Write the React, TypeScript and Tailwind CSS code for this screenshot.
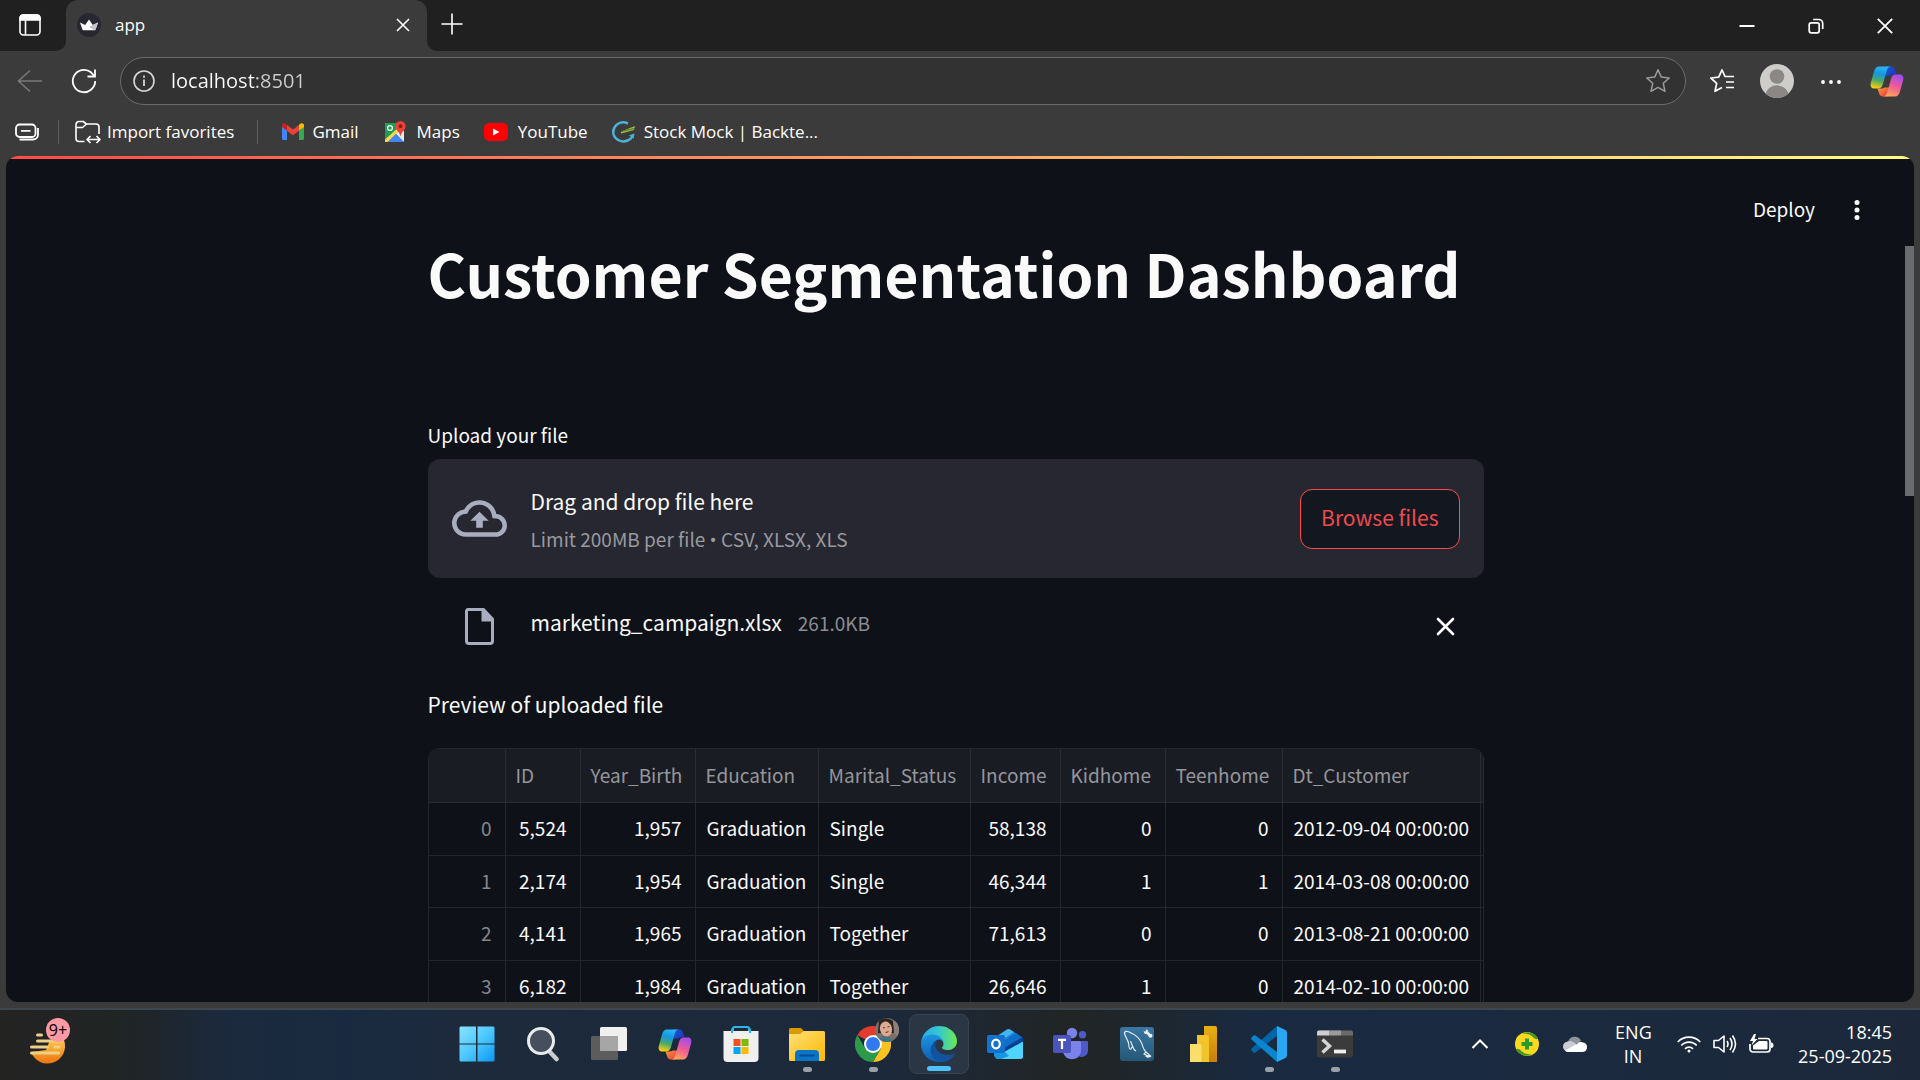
import React, { useId } from "react";

const uiFont = "font-['Segoe_UI','Open_Sans','Noto_Sans',sans-serif]";
const appFont = "font-['Source_Sans_Pro','Noto_Sans_CJK_SC',sans-serif]";

const columns = [
  { name: "", width: "w-[77px]", numeric: true },
  { name: "ID", width: "w-[75px]", numeric: true },
  { name: "Year_Birth", width: "w-[115px]", numeric: true },
  { name: "Education", width: "w-[123px]", numeric: false },
  { name: "Marital_Status", width: "w-[152px]", numeric: false },
  { name: "Income", width: "w-[90px]", numeric: true },
  { name: "Kidhome", width: "w-[105px]", numeric: true },
  { name: "Teenhome", width: "w-[117px]", numeric: true },
  { name: "Dt_Customer", width: "w-[198px]", numeric: false },
];

const rows = [
  ["0", "5,524", "1,957", "Graduation", "Single", "58,138", "0", "0", "2012-09-04 00:00:00"],
  ["1", "2,174", "1,954", "Graduation", "Single", "46,344", "1", "1", "2014-03-08 00:00:00"],
  ["2", "4,141", "1,965", "Graduation", "Together", "71,613", "0", "0", "2013-08-21 00:00:00"],
  ["3", "6,182", "1,984", "Graduation", "Together", "26,646", "1", "0", "2014-02-10 00:00:00"],
];

function CopilotIcon({ className }: { className: string }) {
  const id = useId();
  return (
    <svg viewBox="0 0 34 31" className={className} aria-hidden="true">
      <defs>
        <linearGradient id={id + "a"} x1="0.6" y1="0" x2="0.35" y2="1">
          <stop offset="0" stopColor="#2fb5f4" />
          <stop offset="0.35" stopColor="#1597e0" />
          <stop offset="0.65" stopColor="#4aa86a" />
          <stop offset="1" stopColor="#f5cf10" />
        </linearGradient>
        <linearGradient id={id + "b"} x1="0.7" y1="0" x2="0.3" y2="1">
          <stop offset="0" stopColor="#a14df0" />
          <stop offset="0.5" stopColor="#ee5a96" />
          <stop offset="1" stopColor="#ffa75a" />
        </linearGradient>
        <linearGradient id={id + "c"} x1="0" y1="0" x2="1" y2="0.6">
          <stop offset="0" stopColor="#0c5fd0" />
          <stop offset="1" stopColor="#2536c4" />
        </linearGradient>
        <linearGradient id={id + "d"} x1="0" y1="0" x2="1" y2="1">
          <stop offset="0" stopColor="#ff9a3c" />
          <stop offset="1" stopColor="#e0393e" />
        </linearGradient>
      </defs>
      <path d="M15 .5h6c2.500 0 3.500 1.500 4 3.500l1.500 4.500h-4q-2 0-3 1h-4.500z" fill={`url(#${id}c)`} />
      <path d="M19 30.500h-6c-2.500 0-3.500-1.500-4-3.500l-1.500-4.500h4q2 0 3-1H19z" fill={`url(#${id}d)`} />
      <path d="M9 0.500h12c-2 0-3.500 1.500-4.200 4l-4 14c-.8 2.500-2 4-4.800 4H4.500C1.500 22.500 0 20.500 .8 17L4 5.500C5 2 6.500.5 9 .5z" fill={`url(#${id}a)`} />
      <path d="M25 30.500H13c2 0 3.500-1.500 4.200-4l4-14c.8-2.500 2-4 4.800-4h3.500c3 0 4.500 2 3.700 5.500L30 25.500c-1 3.500-2.500 5-5 5z" fill={`url(#${id}b)`} />
    </svg>
  );
}

function TabStrip() {
  return (
    <header className="flex h-[51px] shrink-0 bg-[#202020]">
      <div className="flex w-[66px] items-center pb-0.5 pl-[18px]">
        <button aria-label="Tab actions" className="text-white">
          <svg viewBox="0 0 24 24" className="size-6" fill="none" stroke="currentColor" strokeWidth="1.6">
            <rect x="2" y="2" width="20" height="20" rx="3.500" />
            <path d="M2 7V5a3 3 0 0 1 3-3h14a3 3 0 0 1 3 3v2z" fill="currentColor" />
            <path d="M7.500 7v15" />
          </svg>
        </button>
      </div>
      <div className="flex items-end">
        <svg viewBox="0 0 10 10" className="-ml-2.5 size-2.5" aria-hidden="true"><path d="M10 0v10H0A10 10 0 0 0 10 0z" fill="#3b3b3b" /></svg>
        <div className="flex h-full w-[361px] items-center rounded-t-xl bg-[#3b3b3b] pr-[17px] pb-0.5 pl-[11px]">
          <svg viewBox="0 0 24 24" className="size-6" aria-hidden="true">
            <circle cx="12" cy="12" r="12" fill="#262730" />
            <path d="M3 9.500l5.200 2.600L12 6.500l3.800 5.600L21 9.500 18.600 16.500q-.3.700-1 .7H6.400q-.7 0-1-.7z" fill="#fff" />
            <path d="M15.800 12.100L21 9.500l-2.400 7q-.3.700-1 .7L12 14z" fill="#c4c4c8" />
          </svg>
          <span className="ml-3.5 flex-1 text-[17px] leading-6 text-white">app</span>
          <button aria-label="Close tab" className="text-white">
            <svg viewBox="0 0 14 14" className="size-3.5" fill="none" stroke="currentColor" strokeWidth="1.6"><path d="M1 1l12 12M13 1L1 13" /></svg>
          </button>
        </div>
        <svg viewBox="0 0 10 10" className="size-2.5" aria-hidden="true"><path d="M0 0v10h10A10 10 0 0 1 0 0z" fill="#3b3b3b" /></svg>
      </div>
      <button aria-label="New tab" className="ml-1 flex items-center pb-1 text-white">
        <svg viewBox="0 0 22 22" className="size-[22px]" fill="none" stroke="currentColor" strokeWidth="1.600"><path d="M11 .5v21M.5 11h21" /></svg>
      </button>
      <div className="ml-auto flex items-center gap-[53px] pr-[27px] text-white">
        <button aria-label="Minimize"><svg viewBox="0 0 16 16" className="size-4" stroke="currentColor" strokeWidth="2"><path d="M.5 8h15" /></svg></button>
        <button aria-label="Restore">
          <svg viewBox="0 0 16 16" className="size-4" fill="none" stroke="currentColor" strokeWidth="1.700"><rect x="1.200" y="4.800" width="10" height="10" rx="2" /><path d="M5.200 1.500h5.500a4 4 0 0 1 4 4V11" /></svg>
        </button>
        <button aria-label="Close"><svg viewBox="0 0 16 16" className="size-4" fill="none" stroke="currentColor" strokeWidth="1.800"><path d="M.8.8l14.400 14.400M15.200.8L.8 15.200" /></svg></button>
      </div>
    </header>
  );
}

function Toolbar() {
  return (
    <div className="flex h-[60px] shrink-0 items-center pr-4 pl-[17px]">
      <button aria-label="Back" className="text-[#7a7a7a]">
        <svg viewBox="0 0 26 24" className="h-6 w-[26px]" fill="none" stroke="currentColor" strokeWidth="1.500"><path d="M25 12H1.500M13 1.500L1.500 12 13 22.500" /></svg>
      </button>
      <button aria-label="Refresh" className="ml-7 text-white">
        <svg viewBox="0 0 26 26" className="size-[26px]" fill="none" stroke="currentColor" strokeWidth="1.800"><path d="M24.200 13A11.200 11.200 0 1 1 20 4.300L23.500 8M24 1.500V8.500h-7.500" /></svg>
      </button>
      <div className="ml-[23px] flex h-12 flex-1 items-center rounded-full border border-[#6b6b6b] bg-[#323232] pr-3.5 pl-3">
        <button aria-label="Site information" className="text-[#d6d6d6]">
          <svg viewBox="0 0 22 22" className="size-[22px]" fill="none" stroke="currentColor" strokeWidth="1.600"><circle cx="11" cy="11" r="10" /><path d="M11 9.500V16M11 5.500v2.200" strokeWidth="1.800" /></svg>
        </button>
        <input
          aria-label="Address"
          defaultValue="localhost:8501"
          className="ml-4 min-w-0 flex-1 bg-[linear-gradient(90deg,#ffffff_84px,#cfcfcf_84px)] bg-clip-text text-[20px] leading-7 text-transparent outline-none"
        />
        <button aria-label="Add to favorites" className="text-[#9b9b9b]">
          <svg viewBox="0 0 26 26" className="size-[26px]" fill="none" stroke="currentColor" strokeWidth="1.500" strokeLinejoin="round"><path d="M13 1.800l3.300 7.300 7.900.9-5.900 5.300 1.700 8L13 19.400l-7 3.900 1.700-8L1.800 10l7.900-.9z" /></svg>
        </button>
      </div>
      <div className="ml-[23px] flex items-center gap-[25px] text-white">
        <button aria-label="Favorites">
          <svg viewBox="0 0 26 26" className="size-[26px]" fill="none" stroke="currentColor" strokeWidth="1.700" strokeLinejoin="round"><path d="M16 8.500L13 1.800 9.700 9.100l-7.900.9 5.900 5.300-1.700 8 7-3.900M17 8.500h8M17 14h8M17 19.500h8M15.500 8.500h2" /></svg>
        </button>
        <button aria-label="Profile">
          <svg viewBox="0 0 34 34" className="size-[34px]">
            <circle cx="17" cy="17" r="17" fill="#cfcdca" />
            <circle cx="17" cy="12.500" r="7.300" fill="#8b8784" />
            <path d="M5.500 29.500a12.200 12.200 0 0 1 23 0A17 17 0 0 1 5.500 29.500z" fill="#8b8784" />
          </svg>
        </button>
        <button aria-label="Settings and more" className="ml-0.5">
          <svg viewBox="0 0 20 20" className="size-5" fill="currentColor"><circle cx="2" cy="11" r="1.900" /><circle cx="10" cy="11" r="1.900" /><circle cx="18" cy="11" r="1.900" /></svg>
        </button>
        <button aria-label="Copilot" className="ml-1"><CopilotIcon className="h-[31px] w-[34px]" /></button>
      </div>
    </div>
  );
}

function Bookmarks() {
  return (
    <nav aria-label="Favorites bar" className="flex h-[45px] shrink-0 items-center pb-1 pl-[15px] text-[17px] leading-6 text-white">
      <button aria-label="Workspaces">
        <svg viewBox="0 0 24 18" className="h-[18px] w-6" fill="none" stroke="currentColor" strokeWidth="1.800"><rect x="1" y="1.500" width="19.500" height="12.500" rx="3.500" /><path d="M6 7.800h9.500M4.500 16.500H18a5 5 0 0 0 5-5V5" /></svg>
      </button>
      <span className="ml-[19px] h-6 w-px bg-[#606060]" />
      <button className="ml-4 flex items-center gap-1.5">
        <svg viewBox="0 0 26 24" className="h-6 w-[26px]" fill="none" stroke="currentColor" strokeWidth="1.600" strokeLinejoin="round">
          <path d="M9.500 21.500H4a3 3 0 0 1-3-3v-14a3 3 0 0 1 3-3h4.200L11.500 4H21a3 3 0 0 1 3 3v7M1 7.500h6.500L11.500 4" />
          <path d="M12.500 19.500h12M15.500 16l-3.500 3.500 3.500 3.500M21.500 16l3.500 3.500-3.500 3.500" />
        </svg>
        Import favorites
      </button>
      <span className="ml-[23px] h-6 w-px bg-[#606060]" />
      <a href="#gmail" className="ml-6 flex items-center gap-2">
        <svg viewBox="0 0 22 17" className="h-[17px] w-[22px]" aria-hidden="true">
          <path d="M0 3v12.500A1.500 1.500 0 0 0 1.500 17H5V7.500z" fill="#4285f4" />
          <path d="M22 3v12.500a1.500 1.500 0 0 1-1.500 1.500H17V7.500z" fill="#34a853" />
          <path d="M17 2v5.500L22 4V2.500C22 .3 19.800-.5 18.200.8z" fill="#fbbc04" />
          <path d="M0 2.500V4l5 3.700V2L3.800.8C2.200-.5 0 .3 0 2.500z" fill="#c5221f" />
          <path d="M5 2v5.700l6 4.500 6-4.500V2l-6 4.500z" fill="#ea4335" />
        </svg>
        Gmail
      </a>
      <a href="#maps" className="ml-6 flex items-center gap-2.5">
        <svg viewBox="0 0 24 24" className="size-6" aria-hidden="true">
          <rect x="2" y="3" width="19" height="19" rx="1.500" fill="#e8eaed" />
          <path d="M2 4.500A1.500 1.500 0 0 1 3.500 3H15l1 6L2 22z" fill="#1e9e54" />
          <path d="M3 22L12 12.500 21 22z" fill="#4285f4" />
          <path d="M2 19.500L16 7l2 2L4.500 22H2z" fill="#fbd64b" />
          <circle cx="7" cy="8" r="2.400" fill="none" stroke="#fff" strokeWidth="1.200" />
          <path d="M17.500 1a5.200 5.200 0 0 1 5.200 5.200c0 3.800-4.200 5.300-5.200 10.300-1-5-5.200-6.500-5.200-10.300A5.200 5.200 0 0 1 17.500 1z" fill="#ea4335" />
          <circle cx="17.500" cy="6.200" r="1.900" fill="#861a14" />
        </svg>
        Maps
      </a>
      <a href="#youtube" className="ml-6 flex items-center gap-2.5">
        <svg viewBox="0 0 24 18" className="h-[18px] w-6" aria-hidden="true"><rect width="24" height="18" rx="5" fill="#f00" /><path d="M9 5.500v7l6.500-3.500z" fill="#fff" /></svg>
        YouTube
      </a>
      <a href="#stockmock" className="ml-6 flex items-center gap-2">
        <svg viewBox="0 0 24 24" className="size-6" fill="none" aria-hidden="true">
          <path d="M16 3.500C7-.5 0 7 1.500 14c1.500 6 8.500 9 14 6.500 3-1.200 4.800-3 5.500-5.500" stroke="#4fb3d9" strokeWidth="2.500" />
          <path d="M22.500 13.500l-5.500 2 4.500 3z" fill="#4fb3d9" />
          <path d="M9 11.500l14-5.500-1 4-13 3.500z" fill="#9bc53d" />
          <path d="M9 11.500l13.500-3" stroke="#44602a" strokeWidth=".8" />
        </svg>
        Stock Mock | Backte...
      </a>
    </nav>
  );
}

function Uploader() {
  return (
    <section className="mt-[107px]">
      <label htmlFor="browse" className="block text-[19px] leading-7">Upload your file</label>
      <div className="mt-2.5 flex h-[119px] items-center rounded-xl bg-[#262730] px-6">
        <svg viewBox="0 0 24 16" className="h-[37px] w-[55px]" fill="#a8adc0" aria-hidden="true">
          <path d="M19.350 6.040A7.490 7.490 0 0 0 12 0C9.110 0 6.600 1.640 5.350 4.040A5.994 5.994 0 0 0 0 10c0 3.310 2.690 6 6 6h13c2.760 0 5-2.240 5-5 0-2.640-2.050-4.780-4.650-4.960zM19 14H6c-2.210 0-4-1.790-4-4 0-2.050 1.530-3.760 3.560-3.970l1.070-.11.5-.95A5.469 5.469 0 0 1 12 2c2.620 0 4.880 1.860 5.390 4.430l.3 1.500 1.530.11A2.980 2.980 0 0 1 22 11c0 1.650-1.350 3-3 3zM8 9h2.550v3h2.900V9H16l-4-4z" />
        </svg>
        <div className="ml-6 flex-1 pt-0.5">
          <p className="text-[21px] leading-9">Drag and drop file here</p>
          <p className="mt-1 text-[19px] leading-8 text-[#99999e]">
            Limit 200MB per file <span className="font-['Open_Sans',sans-serif]">•</span> CSV, XLSX, XLS
          </p>
        </div>
        <button id="browse" className="h-[60px] rounded-xl border border-[#ff4b4b] bg-[#131720] px-5 pb-1 text-[21px] leading-8 text-[#f04a4c]">Browse files</button>
      </div>
      <div className="flex h-24 items-center pr-[29px] pl-[37px]">
        <svg viewBox="0 0 29 37" className="h-[37px] w-[29px]" aria-hidden="true">
          <path d="M3 1.500h15.500l9 9.500v22a2.500 2.500 0 0 1-2.500 2.500H4A2.500 2.500 0 0 1 1.500 33V3A1.500 1.500 0 0 1 3 1.500z" fill="none" stroke="#a8adc0" strokeWidth="3" />
          <path d="M16.500 1.500v12h12l-9.500-12z" fill="#a8adc0" />
        </svg>
        <p className="ml-[37px] flex items-baseline gap-4 pb-2 text-[21px] leading-8">
          marketing_campaign.xlsx
          <span className="text-[19px] text-[#8b8c92]">261.0KB</span>
        </p>
        <button aria-label="Remove file" className="ml-auto">
          <svg viewBox="0 0 19 19" className="size-[19px]" fill="none" stroke="#fff" strokeWidth="2.600" strokeLinecap="round"><path d="M2 2l15 15M17 2L2 17" /></svg>
        </button>
      </div>
    </section>
  );
}

function Preview() {
  return (
    <section className="mt-3">
      <h2 className="text-[21px] leading-9">Preview of uploaded file</h2>
      <div className="mt-[26px] overflow-hidden rounded-t-xl border-t border-l border-[#25272e]">
        <table className="w-full table-fixed border-separate border-spacing-0 text-[19px] leading-7">
          <thead>
            <tr className="h-[54px] bg-[#1a1c24] text-left text-[#95969b]">
              {columns.map((c) => (
                <th key={c.name} className={`${c.width} border-r border-b border-[#2b2d36] pb-0.5 pl-2.5 font-normal`}>{c.name}</th>
              ))}
              <th className="border-r border-b border-[#2b2d36]" />
            </tr>
          </thead>
          <tbody>
            {rows.map((r) => (
              <tr key={r[0]} className="odd:h-[53px] even:h-[52px]">
                {r.map((v, i) => (
                  <td key={i} className={`border-r border-b border-[#25272e] pb-0.5 ${i === 0 ? "text-[#85868b]" : ""} ${columns[i].numeric ? "pr-[13px] text-right" : "pl-[11px] whitespace-nowrap"}`}>{v}</td>
                ))}
                <td className="border-r border-b border-[#25272e]" />
              </tr>
            ))}
          </tbody>
        </table>
      </div>
    </section>
  );
}

const svg36 = "size-9";

function StartIcon() {
  return (
    <svg viewBox="0 0 36 36" className={svg36}>
      <defs><linearGradient id="win" gradientUnits="userSpaceOnUse" x1="0" y1="0" x2="36" y2="36"><stop offset="0" stopColor="#8ce4ff" /><stop offset=".5" stopColor="#4cc8fd" /><stop offset="1" stopColor="#0a95f5" /></linearGradient></defs>
      <path d="M1.500.5H17v17H.5v-16zM18.500.5h16l1 1v16h-17zM.5 18.500H17v17H1.500l-1-1zM18.500 18.500h17v16l-1 1h-16z" fill="url(#win)" />
    </svg>
  );
}
function SearchIcon() {
  return (
    <svg viewBox="0 0 36 36" className={svg36}>
      <path d="M24 25l7.500 8" stroke="#c9ccd0" strokeWidth="4.500" strokeLinecap="round" />
      <circle cx="16" cy="15" r="12.500" fill="#454f5e" stroke="#e9eaec" strokeWidth="3" />
    </svg>
  );
}
function TaskViewIcon() {
  return (
    <svg viewBox="0 0 36 36" className={svg36}>
      <rect y="10" width="27" height="24" rx="1.500" fill="#5c5c5c" />
      <rect x="9" y="1" width="27" height="24" rx="1.500" fill="#f0f0f0" />
      <path d="M9 10h18v15H10.500A1.500 1.500 0 0 1 9 23.500z" fill="#a6a6a6" />
    </svg>
  );
}
function StoreIcon() {
  return (
    <svg viewBox="0 0 36 36" className={svg36}>
      <path d="M10 7V2.500A1.500 1.500 0 0 1 11.500 1h13A1.500 1.500 0 0 1 26 2.500V7" fill="none" stroke="#2bb4ea" strokeWidth="2" />
      <path d="M.5 5h35v27a4 4 0 0 1-4 4h-27a4 4 0 0 1-4-4z" fill="#f0f0f0" />
      <path d="M9 2.500V7M27 2.500V7" stroke="#2bb4ea" strokeWidth="2" />
      <path d="M10.500 13h7v7h-7z" fill="#f25022" /><path d="M18.500 13h7v7h-7z" fill="#7fba00" />
      <path d="M10.500 21h7v7h-7z" fill="#00a4ef" /><path d="M18.500 21h7v7h-7z" fill="#ffb900" />
    </svg>
  );
}
function FolderIcon() {
  return (
    <svg viewBox="0 0 36 36" className={svg36}>
      <defs><linearGradient id="fold" x1="0" y1="0" x2="1" y2="1"><stop offset="0" stopColor="#ffe07a" /><stop offset="1" stopColor="#fcb900" /></linearGradient></defs>
      <path d="M1.500 2H11q1 0 2 1l2.500 3L12 9H0V3.500Q0 2 1.500 2z" fill="#dc9a00" />
      <path d="M0 8h11l3.500-3H34.500A1.500 1.500 0 0 1 36 6.500v27a1.500 1.500 0 0 1-1.500 1.500h-33A1.500 1.500 0 0 1 0 33.500z" fill="url(#fold)" />
      <path d="M6 35V28a4 4 0 0 1 4-4h16a4 4 0 0 1 4 4v7z" fill="#0a74c6" />
      <path d="M11 29.500h14" stroke="#084e8c" strokeWidth="2" strokeLinecap="round" />
    </svg>
  );
}
function ChromeIcon() {
  return (
    <span className="relative">
      <svg viewBox="0 0 36 36" className={svg36}>
        <path d="M18 18L2.400 9A18 18 0 0 1 33.600 9H18z" fill="#e33b2e" />
        <path d="M18 18L33.600 9A18 18 0 0 1 18 36l7.800-13.500z" fill="#fcc31e" />
        <path d="M18 18l7.800 4.500L18 36A18 18 0 0 1 2.400 9l7.800 13.500z" fill="#2d9a4b" />
        <path d="M18 9h15.600q1.500 2.500 2 5H22z" fill="#fcc31e" />
        <circle cx="18" cy="18" r="9" fill="#fff" /><circle cx="18" cy="18" r="7" fill="#3079ee" />
      </svg>
      <svg viewBox="0 0 24 24" className="absolute -top-2 left-5 size-6">
        <defs><clipPath id="face"><circle cx="12" cy="12" r="12" /></clipPath></defs>
        <g clipPath="url(#face)">
          <path d="M0 0h24v24H0z" fill="#7a716b" /><path d="M4 2q7-4 14 1l2 12H3z" fill="#2c2422" />
          <ellipse cx="11" cy="11" rx="6" ry="7.500" fill="#dcab92" transform="rotate(-15 11 11)" />
          <path d="M1 24l7-6 6 1 5 5z" fill="#3f7284" /><path d="M18 2l6 3v14l-5-4z" fill="#8c8078" />
          <path d="M8 10l2-.5M12.500 9l2-.5M10.500 14.500l3-.8" stroke="#553029" />
        </g>
      </svg>
    </span>
  );
}
function EdgeIcon() {
  return (
    <svg viewBox="0 0 256 256" className={svg36}>
      <defs>
        <linearGradient id="e1" x1="0" y1="0" x2="1" y2="0"><stop offset="0" stopColor="#2aa9ea" /><stop offset=".5" stopColor="#35c7cf" /><stop offset="1" stopColor="#6bea4f" /></linearGradient>
        <linearGradient id="e2" x1="0" y1="0" x2="0" y2="1"><stop offset="0" stopColor="#1e9ae2" /><stop offset="1" stopColor="#0c5cb0" /></linearGradient>
      </defs>
      <path d="M235.700 195.500a93.700 93.700 0 0 1-10.600 4.700 101.900 101.900 0 0 1-35.900 6.400c-47.300 0-88.500-32.500-88.500-74.300a31.500 31.500 0 0 1 16.400-27.300c-42.800 1.800-53.800 46.400-53.800 72.500 0 73.900 68.100 81.400 82.800 81.400 7.900 0 19.800-2.300 27-4.600l1.300-.4a128.300 128.300 0 0 0 66.600-52.800 4 4 0 0 0-5.300-5.600z" fill="#10549f" />
      <path d="M105.700 241.400a79.200 79.200 0 0 1-22.700-21.300 80.700 80.700 0 0 1 29.500-120c3.200-1.500 8.500-4.100 15.600-4a32.400 32.400 0 0 1 25.700 13 31.900 31.900 0 0 1 6.300 18.700c0-.2 24.500-79.600-80-79.600C36.200 48.200 0 90 0 126.500a130.200 130.200 0 0 0 12.100 56 128 128 0 0 0 156.400 67.100 75.500 75.500 0 0 1-62.800-8.200z" fill="url(#e2)" />
      <path d="M152.300 148.900c-.9 1-3.400 2.500-3.400 5.600 0 2.600 1.700 5.200 4.800 7.300 14.300 10 41.400 8.700 41.500 8.700a59.600 59.600 0 0 0 30.300-8.400 61.400 61.400 0 0 0 30.400-52.900c.3-22.400-8-37.300-11.300-43.900C223.500 23.900 177.700 0 128 0A128 128 0 0 0 0 126.200c.5-36.500 36.800-66 80-66 3.500 0 23.500.3 42 10a72.600 72.600 0 0 1 30.900 29.300c6.100 10.600 7.200 24.100 7.200 29.500 0 5.300-2.700 13.300-7.800 19.900z" fill="url(#e1)" />
    </svg>
  );
}
function OutlookIcon() {
  return (
    <svg viewBox="0 0 36 36" className={svg36}>
      <path d="M7 12L20 3.500q1.500-.8 3 0L36 12v18a3 3 0 0 1-3 3H12a5 5 0 0 1-5-5z" fill="#1d87d8" />
      <path d="M11 9.500L20 3.500q1.500-.8 3 0l4 2.500-15 10z" fill="#43b5f0" />
      <path d="M18 14L29 7l6 4.500L18 22z" fill="#0d6ecb" />
      <path d="M18 21.500L35.500 11q.5.500.5 2v3L18 27z" fill="#05418f" />
      <path d="M36 15.500V30a3 3 0 0 1-3 3H12q-3 0-4-2z" fill="#4fd5fb" />
      <path d="M7 26h11l4 4-8 3h-2a5 5 0 0 1-5-5z" fill="#1697e0" />
      <rect y="9" width="18" height="18" rx="1.800" fill="#1272cd" />
      <ellipse cx="9" cy="18" rx="3.800" ry="4.400" fill="none" stroke="#fff" strokeWidth="2.300" />
    </svg>
  );
}
function TeamsIcon() {
  return (
    <svg viewBox="0 0 36 36" className={svg36}>
      <circle cx="29.500" cy="8.700" r="3.700" fill="#5059c9" />
      <path d="M25 15h9q1 0 1 1v9a6.500 6.500 0 0 1-10 5z" fill="#5059c9" />
      <circle cx="19" cy="7" r="5.200" fill="#7b83eb" />
      <path d="M10 15h16.500q1.500 0 1.500 1.500V26a9.200 9.200 0 0 1-18 0z" fill="#7b83eb" />
      <rect y="9" width="18" height="18" rx="1.800" fill="#4b53bc" />
      <path d="M5 13.800h8M9 13.800V23" stroke="#fff" strokeWidth="2.200" />
    </svg>
  );
}
function WorkbenchIcon() {
  return (
    <svg viewBox="0 0 36 36" className={svg36} fill="none">
      <defs><linearGradient id="wb" x1="0" y1="0" x2="0" y2="1"><stop offset="0" stopColor="#3a77a5" /><stop offset="1" stopColor="#265876" /></linearGradient></defs>
      <rect x="1" y="1" width="34" height="34" rx="3" fill="url(#wb)" />
      <path d="M17 25c-2-1-3-3-3.500-5-1 2-1.500 3.500-2.500 3-1.500-1-1-4-1.500-6C8.500 13 5 9 5.500 6.500c1-2 4.500-1 6.500.5 5 2 9 6 11 11 1 3 1.500 6 4 8l5 4.500-4-1 1.500 2-3-1.500M13.500 20l-2-5M27 26l-2 2 6 3" stroke="#e8f0f4" strokeWidth="1.100" />
      <path d="M27 5.500l5 5" stroke="#e8f0f4" strokeWidth="2.600" /><circle cx="27" cy="5.800" r="2.200" fill="#e8f0f4" /><circle cx="31.500" cy="9.800" r="2" fill="#e8f0f4" /><circle cx="25.800" cy="4.300" r="1.200" fill="#3a77a5" />
    </svg>
  );
}
function PowerBiIcon() {
  return (
    <svg viewBox="0 0 36 36" className={svg36}>
      <defs><linearGradient id="pb" x1="0" y1="0" x2="0" y2="1"><stop offset="0" stopColor="#eab010" /><stop offset="1" stopColor="#c87d0e" /></linearGradient></defs>
      <path d="M19 0h11a2 2 0 0 1 2 2v34H19z" fill="url(#pb)" /><path d="M12 9h10a2 2 0 0 1 2 2v25H12z" fill="#f2c42c" /><path d="M5 18h9.500a2 2 0 0 1 2 2v16H5z" fill="#f9de6c" />
    </svg>
  );
}
function CodeIcon() {
  return (
    <svg viewBox="0 0 36 36" className={svg36}>
      <path d="M26 0v10L4.500 26.500q-1 .6-2 0L.5 24.500q-.8-1 0-2z" fill="#0065a9" />
      <path d="M26 36V26L4.500 9.500q-1-.6-2 0L.5 11.500q-.8 1 0 2z" fill="#0b85ce" />
      <path d="M26 0l8.500 4q1.500.8 1.500 2.500v23q0 1.700-1.500 2.500L26 36z" fill="#29a7f2" />
    </svg>
  );
}
function TerminalIcon() {
  return (
    <svg viewBox="0 0 36 36" className={svg36}>
      <path d="M2 4.500h32a2 2 0 0 1 2 2V10H0V6.500a2 2 0 0 1 2-2z" fill="#6a6a6a" /><path d="M2 4.500h10V10H0V6.500a2 2 0 0 1 2-2z" fill="#cfcfcf" /><path d="M12 4.500h12V10H12z" fill="#9a9a9a" />
      <path d="M0 9.500h36v20a2 2 0 0 1-2 2H2a2 2 0 0 1-2-2z" fill="#3b3b3b" />
      <path d="M5.500 13.500l7 6.500-7 6.500" fill="none" stroke="#d5d5d5" strokeWidth="3.500" /><path d="M17 25.500h12" stroke="#eee" strokeWidth="3.800" />
    </svg>
  );
}

const apps: { name: string; icon: React.ReactNode; state?: "open" | "active" }[] = [
  { name: "Start", icon: <StartIcon /> },
  { name: "Search", icon: <SearchIcon /> },
  { name: "Task view", icon: <TaskViewIcon /> },
  { name: "Copilot", icon: <CopilotIcon className="h-[31px] w-[34px]" /> },
  { name: "Microsoft Store", icon: <StoreIcon /> },
  { name: "File Explorer", icon: <FolderIcon />, state: "open" },
  { name: "Chrome", icon: <ChromeIcon />, state: "open" },
  { name: "Edge", icon: <EdgeIcon />, state: "active" },
  { name: "Outlook", icon: <OutlookIcon /> },
  { name: "Teams", icon: <TeamsIcon /> },
  { name: "MySQL Workbench", icon: <WorkbenchIcon /> },
  { name: "Power BI", icon: <PowerBiIcon /> },
  { name: "Visual Studio Code", icon: <CodeIcon />, state: "open" },
  { name: "Terminal", icon: <TerminalIcon />, state: "open" },
];

function Taskbar() {
  return (
    <footer className="grid h-[72px] shrink-0 grid-cols-[447fr_918px_555fr] items-center border-t-2 border-[#3e4650] bg-[linear-gradient(90deg,#232322_0%,#202524_6%,#1f252b_8%,#1b293b_11%,#192a40_18%,#1d2a3c_24%,#1c293b_46%,#1f262e_52%,#212524_56%,#1e272f_60%,#19293f_65%,#1a2a40_74%,#1c283a_100%)] pb-0.5 text-white">
      <button aria-label="Widgets" className="relative ml-7 h-[60px] w-12">
        <svg viewBox="0 0 48 60" className="h-[60px] w-12">
          <defs><linearGradient id="sun" x1="0" y1="0" x2="0" y2="1"><stop offset="0" stopColor="#fcc648" /><stop offset="1" stopColor="#ee7410" /></linearGradient></defs>
          <path d="M36 26a17 17 0 1 1-33 12l15-2 4-10z" fill="url(#sun)" />
          <path d="M9.500 21h4M9.500 27h23M3.500 33h16M27 33h4M3.500 39h27" stroke="#edcf87" strokeWidth="3" strokeLinecap="round" />
        </svg>
        <span className="absolute top-1 left-[18px] flex size-6 items-center justify-center rounded-full bg-[#ff99a4] text-[16px] leading-6 text-black">9+</span>
      </button>
      <nav aria-label="Taskbar" className="flex gap-1.5">
        {apps.map((a) => (
          <button key={a.name} aria-label={a.name} className={`relative flex size-[60px] items-center justify-center rounded-lg ${a.state === "active" ? "border border-[#39434f] bg-[#2b3644]" : ""}`}>
            {a.icon}
            {a.state && <span className={`absolute bottom-0.5 h-[5px] rounded-full ${a.state === "active" ? "w-6 bg-[#4cc2ff]" : "w-[9px] bg-[#9aa0a8]"}`} />}
          </button>
        ))}
      </nav>
      <div className="flex items-center justify-end pr-7 text-[18px] leading-6">
        <button aria-label="Show hidden icons"><svg viewBox="0 0 18 12" className="h-3 w-[18px]" fill="none" stroke="#fff" strokeWidth="2"><path d="M1.500 10L9 2.500l7.500 7.500" /></svg></button>
        <button aria-label="Antivirus" className="ml-[26px]">
          <svg viewBox="0 0 24 24" className="size-6">
            <circle cx="12" cy="12" r="12" fill="#ffd91f" />
            <path d="M7 1.500A12 12 0 0 1 23 7c-4 1-5-3-9-4.500q-4-1-7-1zM17 22.500A12 12 0 0 1 1 17c4-1 5 3 9 4.500q4 1 7 1z" fill="#3a9a28" />
            <path d="M12 6.500v11M6.500 12h11" stroke="#279a30" strokeWidth="4" />
          </svg>
        </button>
        <button aria-label="OneDrive" className="ml-6">
          <svg viewBox="0 0 24 16" className="h-4 w-6">
            <path d="M5 6a7 7 0 0 1 13-1.500l-8 6z" fill="#8f949c" /><path d="M4.500 5.500Q8 4 11 6.500l4 3L3 15Q0 13.500 0 10.500 0 6.500 4.500 5.500z" fill="#c9ccd2" />
            <path d="M14 8q2.500-3.500 6-1.500 4 .5 4 4.500 0 5-5 5H5q-2 0-3-1.500z" fill="#fff" />
          </svg>
        </button>
        <button className="ml-7 w-9 text-center">ENG<br />IN</button>
        <button aria-label="Network, volume and battery" className="ml-[26px] flex items-center gap-3">
          <svg viewBox="0 0 24 18" className="h-[18px] w-6" fill="none" stroke="#fff" strokeWidth="1.700"><path d="M.8 7a15.500 15.500 0 0 1 22.400 0M4.300 10.500a10.500 10.500 0 0 1 15.400 0M8 13.800a5.500 5.500 0 0 1 8 0" /><circle cx="12" cy="16" r="1.500" fill="#fff" stroke="none" /></svg>
          <svg viewBox="0 0 24 20" className="h-5 w-6" fill="none" stroke="#fff" strokeWidth="1.600" strokeLinejoin="round"><path d="M1 6.500h4.500L11 2v16l-5.500-4.500H1zM14 7q2 3 0 6M17 4q4 6 0 12M19.500 1.500q6 8.500 0 17" /></svg>
          <svg viewBox="0 0 25 20" className="h-5 w-[25px]" fill="none" stroke="#fff" strokeWidth="1.700"><path d="M9 4.500h9a3 3 0 0 1 3 3v7.500a3 3 0 0 1-3 3H4a3 3 0 0 1-3-3V10" /><path d="M10 7h7.500q1 0 1 1v6.500q0 1-1 1H5q-1 0-1-1v-3z" fill="#fff" stroke="none" /><path d="M22 8.500q2.500 0 2.500 2.700T22 14z" fill="#fff" stroke="none" /><path d="M5 0L1 7h3L2.500 11.500 8.500 5h-3L7 0z" fill="#fff" stroke="none" /></svg>
        </button>
        <button className="ml-6 text-right">18:45<br />25-09-2025</button>
      </div>
    </footer>
  );
}

export default function App() {
  return (
    <div className={`flex h-screen flex-col overflow-hidden bg-[#3b3b3b] ${uiFont}`}>
      <TabStrip />
      <Toolbar />
      <Bookmarks />
      <div className="min-h-0 flex-1 px-1.5 pb-1.5">
        <div className={`relative h-full overflow-hidden rounded-xl bg-[#0e1117] text-[#fafafa] ${appFont}`}>
          <div className="h-[3px] bg-[linear-gradient(90deg,#ff4b4b,#fffd80)]" />
          <div className="flex h-[73px] items-center justify-end pt-7 pr-[54px]">
            <button className="pb-0.5 text-[19px] leading-7">Deploy</button>
            <button aria-label="Main menu" className="ml-[39px]">
              <svg viewBox="0 0 6 20" className="h-5 w-1.5" fill="currentColor"><circle cx="3" cy="2.500" r="2.500" /><circle cx="3" cy="10" r="2.500" /><circle cx="3" cy="17.500" r="2.500" /></svg>
            </button>
          </div>
          <div className="pr-[9px]">
            <main className="mx-auto w-full max-w-[1056px]">
              <h1 className="text-[59px] leading-[82px] font-bold whitespace-nowrap">Customer Segmentation Dashboard</h1>
              <Uploader />
              <Preview />
            </main>
          </div>
          <div className="absolute top-[90px] right-0 h-[250px] w-[9px] bg-[#6b6c70]" />
        </div>
      </div>
      <Taskbar />
    </div>
  );
}
